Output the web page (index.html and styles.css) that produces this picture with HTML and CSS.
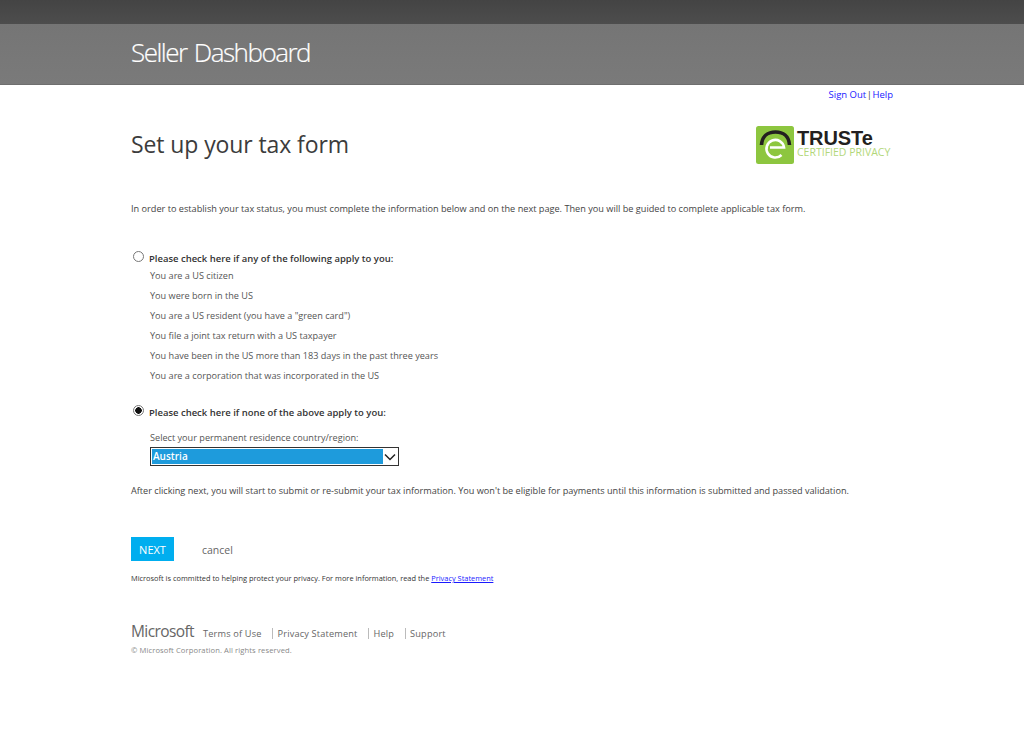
FILE: index.html
```html
<!DOCTYPE html>
<html lang="en">
<head>
<meta charset="utf-8">
<title>Seller Dashboard</title>
<link rel="stylesheet" href="styles.css">
</head>
<body>
<div class="topbar"></div>
<header class="brandbar"><div class="wrap"><span class="brand">Seller Dashboard</span></div></header>
<main class="wrap">
  <div class="account"><a href="#">Sign Out</a> <span class="pipe">|</span> <a href="#">Help</a></div>
  <div class="titlerow">
    <h1>Set up your tax form</h1>
    <div class="truste">
      <svg class="seal" width="38" height="38" viewBox="0 0 38 38" aria-hidden="true">
        <rect x="0" y="0" width="38" height="38" rx="2.5" fill="#8dc63f"/>
        <path d="M5.500 19 C6 10 12 6 19.500 6 C27 6 33 10 33.500 19" fill="none" stroke="#231f20" stroke-width="3.600"/>
        <path d="M25.500 29 A8.800 8.800 0 1 1 28 21.500 L14 21.500" fill="none" stroke="#fff" stroke-width="2.600"/>
      </svg>
      <div class="truste-text"><span class="truste-name">TRUSTe</span><span class="truste-sub">CERTIFIED PRIVACY</span></div>
    </div>
  </div>
  <p class="intro">In order to establish your tax status, you must complete the information below and on the next page. Then you will be guided to complete applicable tax form.</p>
  <form>
    <label class="choice first"><input type="radio" name="st"><strong>Please check here if any of the following apply to you:</strong></label>
    <ul class="conditions">
      <li>You are a US citizen</li>
      <li>You were born in the US</li>
      <li>You are a US resident (you have a "green card")</li>
      <li>You file a joint tax return with a US taxpayer</li>
      <li>You have been in the US more than 183 days in the past three years</li>
      <li>You are a corporation that was incorporated in the US</li>
    </ul>
    <label class="choice second"><input type="radio" name="st" checked><strong>Please check here if none of the above apply to you:</strong></label>
    <div class="country">
      <div class="country-label">Select your permanent residence country/region:</div>
      <div class="select"><span class="select-value">Austria</span><span class="select-arrow"><svg width="12" height="8" viewBox="0 0 12 8" aria-hidden="true"><path d="M1 1.500 L6 6.500 L11 1.500" fill="none" stroke="#222" stroke-width="1.500"/></svg></span></div>
    </div>
    <p class="after">After clicking next, you will start to submit or re-submit your tax information. You won't be eligible for payments until this information is submitted and passed validation.</p>
    <div class="actions"><button type="button" class="next">NEXT</button><a class="cancel" href="#">cancel</a></div>
    <p class="privacy">Microsoft is committed to helping protect your privacy. For more information, read the <a href="#">Privacy Statement</a></p>
  </form>
  <footer>
    <div class="footer-links"><span class="ms">Microsoft</span><a href="#">Terms of Use</a><a class="sep" href="#">Privacy Statement</a><a class="sep" href="#">Help</a><a class="sep" href="#">Support</a></div>
    <div class="copy">© Microsoft Corporation. All rights reserved.</div>
  </footer>
</main>
</body>
</html>
```
FILE: styles.css
```css
* { box-sizing: border-box; }
html, body { margin: 0; padding: 0; }
body { background: #fff; color: #444; font-family: "Open Sans", "Noto Sans", sans-serif; font-size: 9px; height: 756px; overflow: hidden; }
.topbar { height: 24px; background: linear-gradient(#444, #4d4d4d); }
.brandbar { height: 61px; background: linear-gradient(#757575, #7a7a7a); border-bottom: 1px solid #6e6e6e; }
.wrap { margin-left: 131px; width: 762px; }
.brand { display: block; color: #fff; font-size: 26px; font-weight: 300; line-height: 57px; letter-spacing: -1.5px; word-spacing: 2px; -webkit-text-stroke: .2px #fff; }
.account { display: flex; justify-content: flex-end; gap: .5px; height: 20px; padding-top: 3px; font-size: 9.500px; line-height: 14px; }
.account a { color: #1a1aff; text-decoration: none; }
.pipe { color: #444; }
.titlerow { display: flex; justify-content: space-between; height: 73px; padding-top: 21px; }
h1 { margin: 0; font-size: 23px; font-weight: 400; line-height: 36px; color: #3c3c3c; letter-spacing: -.1px; }
.truste { display: flex; align-items: flex-start; }
.seal { display: block; margin-right: 3px; }
.truste-text { display: flex; flex-direction: column; width: 96px; padding-top: 2px; }
.truste-name { font-family: "Liberation Sans", sans-serif; font-weight: 700; font-size: 20px; line-height: 20px; color: #231f20; letter-spacing: -.1px; }
.truste-sub { font-size: 10.500px; line-height: 9px; color: #b2d77a; white-space: nowrap; }
.intro { margin: 24px 0 0; line-height: 13px; font-size: 9.160px; white-space: nowrap; }
.choice { display: flex; align-items: flex-start; color: #333; line-height: 14px; }
.choice input { appearance: none; margin: 0 7px 0 0; width: 11px; height: 11px; border: 1px solid #777; border-radius: 50%; background: #fff; flex: none; position: relative; top: -1px; left: 2px; }
.choice input:checked { background: radial-gradient(circle, #111 0 3px, #fff 3.500px); }
.choice strong { font-weight: 600; font-size: 9.470px; }
.first { margin-top: 37px; }
.conditions { list-style: none; margin: 0 0 0 19px; padding: 0; }
.conditions li { height: 20px; line-height: 20px; font-size: 9.150px; color: #555; }
.second { margin-top: 20px; }
.country { margin: 11px 0 0 19px; color: #555; font-size: 9.150px; }
.country-label { line-height: 14px; }
.select { display: flex; width: 249px; height: 19px; margin-top: 2px; border: 1px solid #333; padding: 1px; background: #fff; }
.select-value { flex: 1; background: #1e9bdc; color: #fff; font-weight: 600; font-size: 10px; line-height: 15px; padding-left: 1px; }
.select-arrow { width: 14px; display: flex; align-items: center; justify-content: center; }
.after { margin: 18px 0 0; line-height: 13px; font-size: 9.140px; white-space: nowrap; }
.actions { display: flex; align-items: center; margin-top: 40px; }
.next { width: 43px; height: 24px; border: 0; padding: 0; background: #00aeef; color: #fff; font-family: inherit; font-size: 11px; }
.cancel { margin-left: 28px; margin-top: 1px; color: #666; font-size: 10.500px; text-decoration: none; }
.privacy { margin: 12px 0 0; font-size: 7.420px; line-height: 11px; color: #333; white-space: nowrap; }
.privacy a { color: #1a1aff; text-decoration: underline; }
footer { margin-top: 39px; color: #666; }
.footer-links { display: flex; align-items: baseline; font-size: 9.200px; line-height: 16px; }
.footer-links a { color: #666; text-decoration: none; letter-spacing: .17px; }
.ms { width: 72px; font-size: 15.500px; font-weight: 500; color: #666; letter-spacing: -.6px; }
.sep { border-left: 1px solid #bbb; margin-left: 10.500px; padding-left: 4.500px; line-height: 11px; }
.copy { font-size: 7.600px; color: #888; line-height: 11px; margin-top: 3px; letter-spacing: .1px; }
```
